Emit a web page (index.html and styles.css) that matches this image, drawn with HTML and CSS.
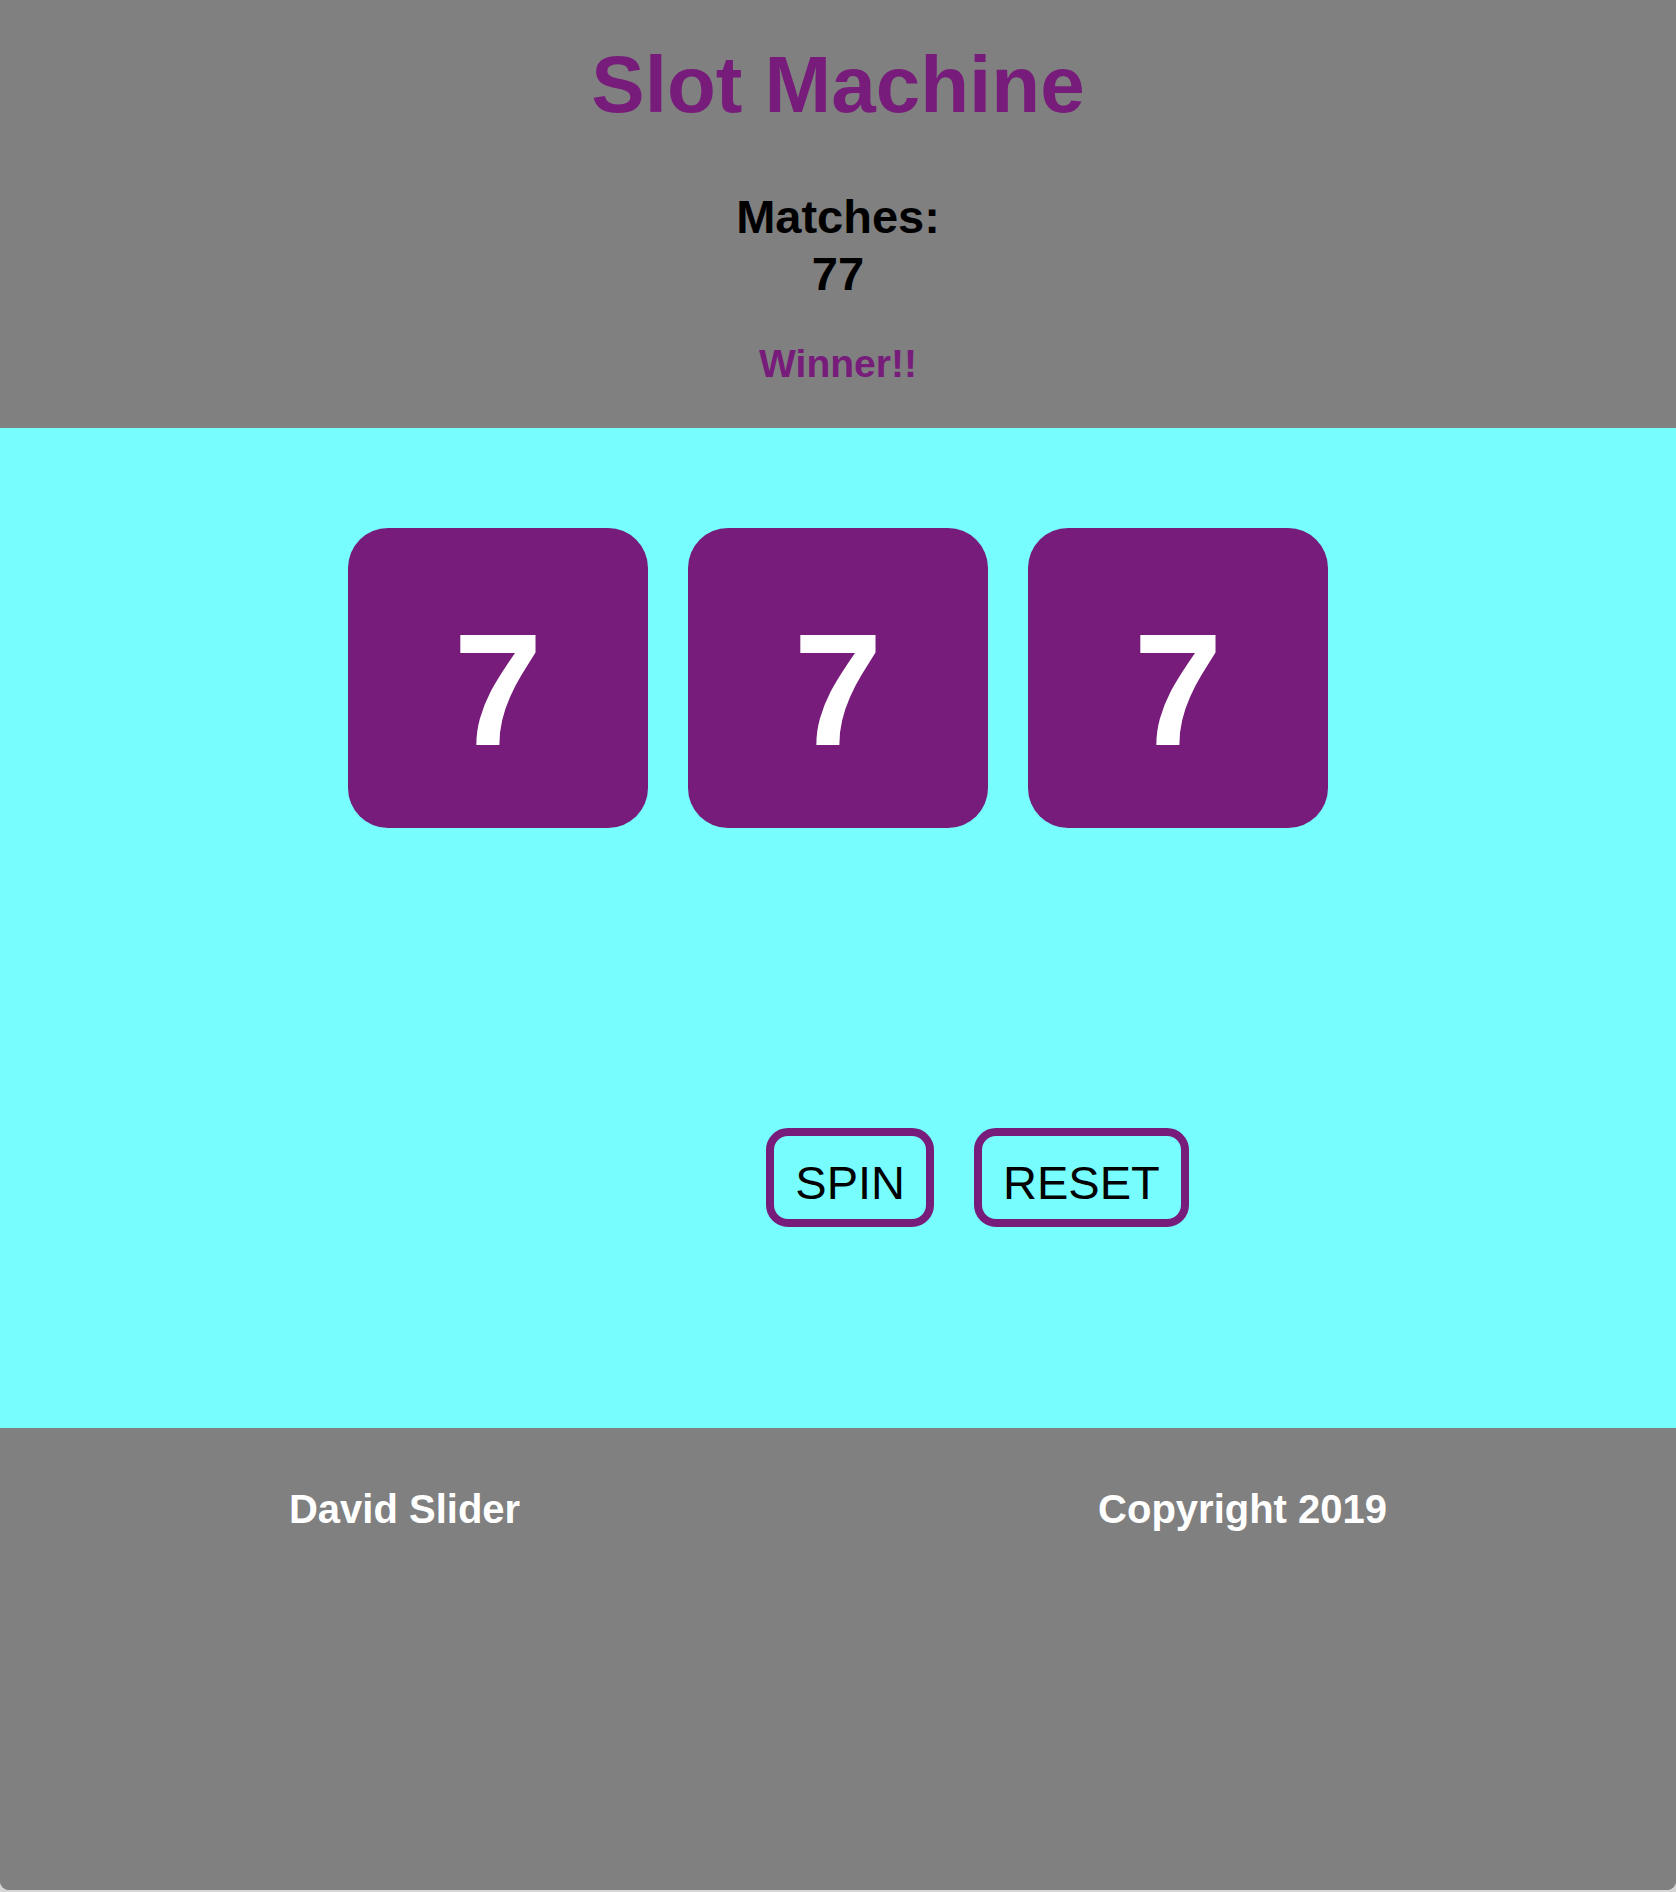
FILE: index.html
```html
<!DOCTYPE html>
<html lang="en">
<head>
<meta charset="utf-8">
<title>Slot Machine</title>
<link rel="stylesheet" href="styles.css">
</head>
<body>
<div class="page">
  <header class="top">
    <h1 class="title">Slot Machine</h1>
    <div class="matches">
      <div class="matches-label">Matches:</div>
      <div class="matches-count">77</div>
    </div>
    <div class="status">Winner!!</div>
  </header>
  <main class="machine">
    <div class="reels">
      <div class="reel">7</div>
      <div class="reel">7</div>
      <div class="reel">7</div>
    </div>
    <div class="controls">
      <button class="btn" type="button">SPIN</button>
      <button class="btn" type="button">RESET</button>
    </div>
  </main>
  <footer class="bottom">
    <div class="foot-item">David Slider</div>
    <div class="foot-item">Copyright 2019</div>
  </footer>
</div>
</body>
</html>
```
FILE: styles.css
```css
html {
  background: #d6d6d6;
}
body {
  margin: 0;
  font-family: "Liberation Sans", Arial, Helvetica, sans-serif;
}
.page {
  height: 1890px;
  display: flex;
  flex-direction: column;
  background: #808080;
  border-radius: 0 0 9px 9px;
  overflow: hidden;
}
.top {
  background: #808080;
  text-align: center;
  padding: 39px 0 42px;
}
.title {
  margin: 0;
  font-size: 80px;
  line-height: 92px;
  font-weight: bold;
  color: #771c7a;
}
.matches {
  margin-top: 57px;
  font-size: 47px;
  line-height: 57px;
  font-weight: bold;
  color: #000;
}
.status {
  margin-top: 39px;
  font-size: 39px;
  line-height: 45px;
  font-weight: bold;
  color: #771c7a;
}
.machine {
  background: #77fdfe;
  padding: 100px 0 201px;
}
.reels {
  display: flex;
  justify-content: center;
  gap: 40px;
}
.reel {
  width: 300px;
  height: 300px;
  box-sizing: border-box;
  padding-top: 24px;
  border-radius: 40px;
  background: #771c7a;
  color: #fff;
  font-size: 160px;
  font-weight: bold;
  display: flex;
  align-items: center;
  justify-content: center;
}
.controls {
  margin-top: 300px;
  display: flex;
  justify-content: center;
  gap: 40px;
  padding-left: 279px;
}
.btn {
  font-family: "Liberation Sans", Arial, Helvetica, sans-serif;
  font-size: 47px;
  line-height: 55px;
  color: #000;
  background: transparent;
  border: 8px solid #771c7a;
  border-radius: 22px;
  padding: 19px 21px 9px;
  margin: 0;
}
.bottom {
  flex: 1;
  background: #808080;
  display: flex;
  justify-content: space-around;
  align-items: flex-start;
  padding-top: 58px;
}
.foot-item {
  color: #fff;
  font-size: 40px;
  line-height: 46px;
  font-weight: bold;
}
```
